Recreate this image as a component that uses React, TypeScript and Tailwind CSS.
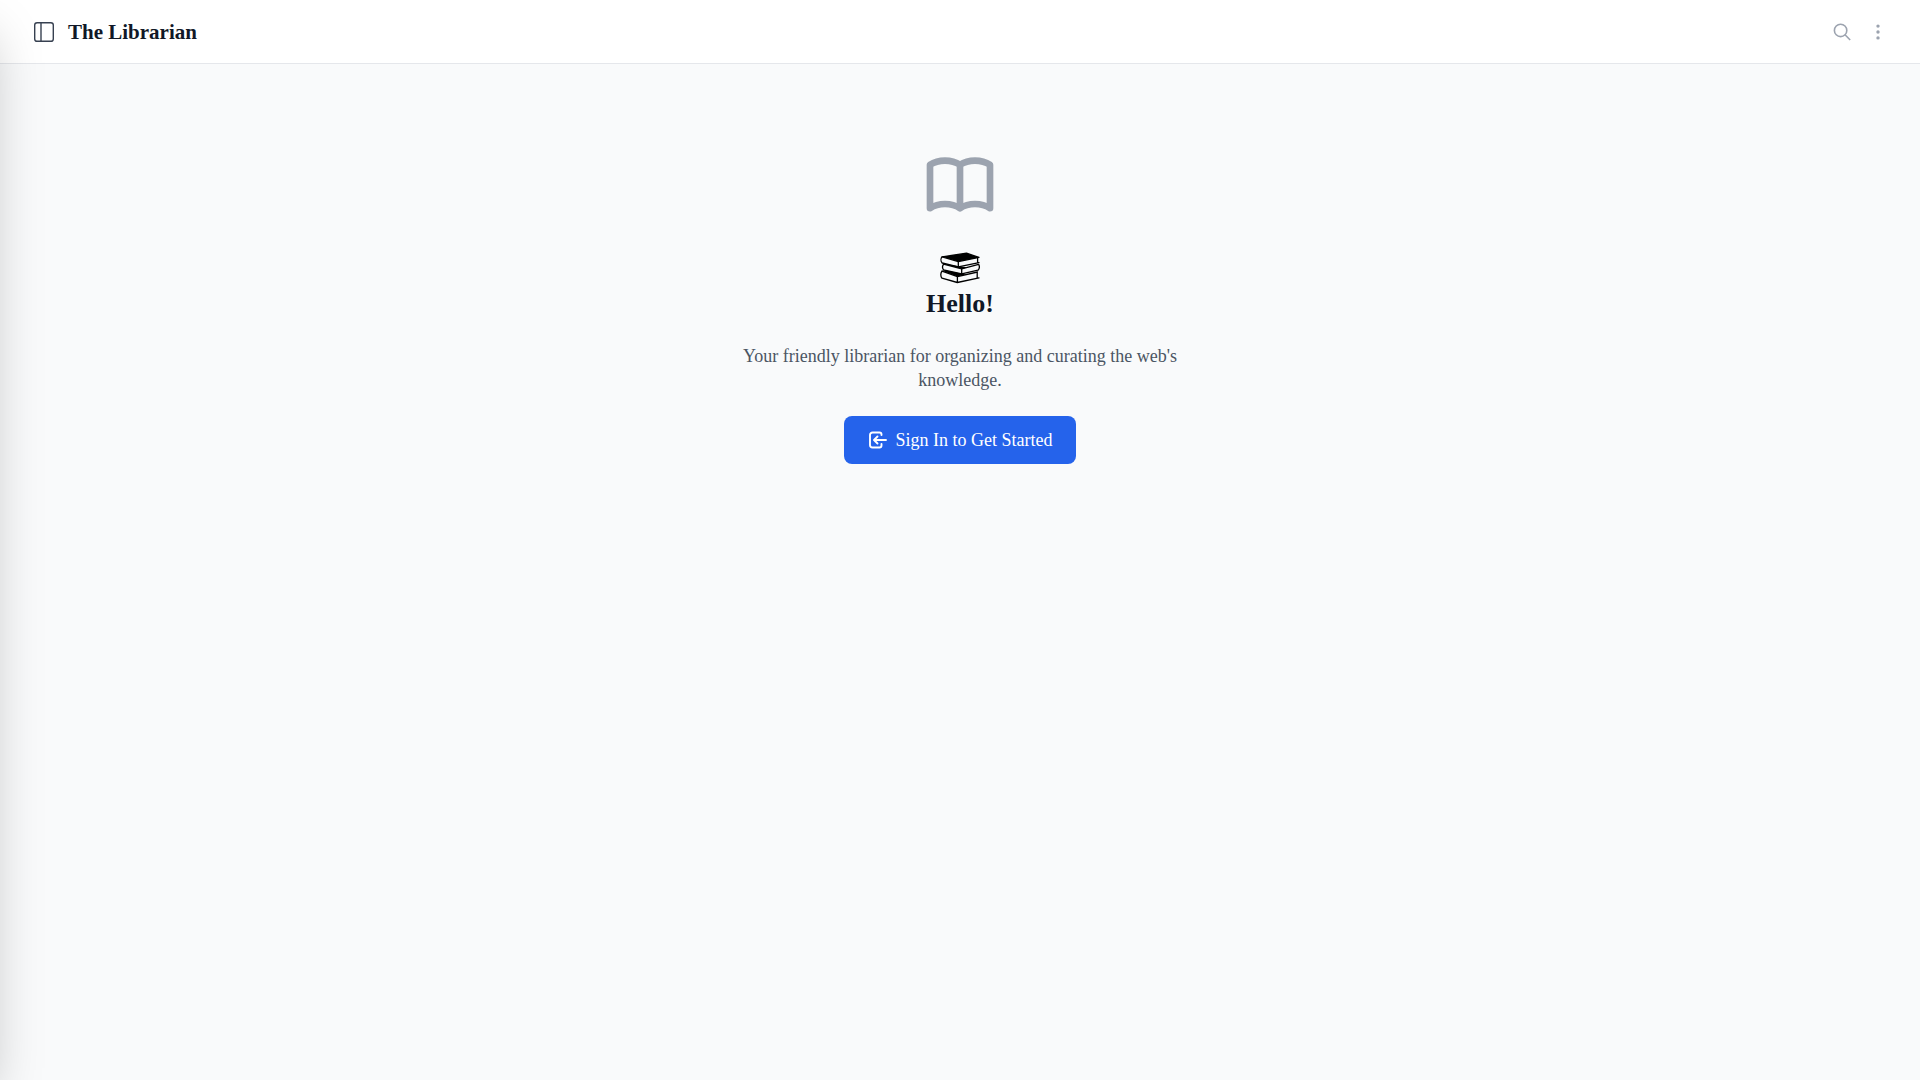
function SidebarIcon() {
  return (
    <svg className="w-6 h-6" viewBox="0 0 24 24" fill="none" stroke="currentColor" strokeWidth="1.4">
      <rect x="2.7" y="2.7" width="18.6" height="18.6" rx="2.4" />
      <path d="M9 2.7v18.6" />
    </svg>
  );
}

function SearchIcon() {
  return (
    <svg className="w-5 h-5" viewBox="0 0 20 20" fill="none" stroke="currentColor" strokeWidth="1.6">
      <circle cx="8.6" cy="8.4" r="6.2" />
      <path d="M13 12.8l5.200 5.200" />
    </svg>
  );
}

function DotsIcon() {
  return (
    <svg className="w-5 h-5" viewBox="0 0 20 20" fill="currentColor">
      <circle cx="10" cy="4.1" r="1.7" />
      <circle cx="10" cy="10" r="1.7" />
      <circle cx="10" cy="15.9" r="1.7" />
    </svg>
  );
}

function BookIcon() {
  return (
    <svg className="w-20 h-20 text-[#9ca3af]" viewBox="0 0 24 24" fill="none" stroke="currentColor" strokeWidth="2" strokeLinecap="round" strokeLinejoin="round">
      <path d="M12 6.253v13m0-13C10.832 5.477 9.246 5 7.5 5S4.168 5.477 3 6.253v13C4.168 18.477 5.754 18 7.5 18s3.332.477 4.5 1.253m0-13C13.168 5.477 14.754 5 16.5 5c1.747 0 3.332.477 4.5 1.253v13C19.832 18.477 18.247 18 16.5 18c-1.746 0-3.332.477-4.5 1.253" />
    </svg>
  );
}

function BooksIcon() {
  return (
    <svg className="w-10 h-8" viewBox="0 0 40 32" fill="none" stroke="#000" strokeWidth="1.3" strokeLinejoin="round" strokeLinecap="round">
      {/* bottom book */}
      <path d="M2 19.200C.4 21 .4 24.500 2 26.200L17.300 30.500 39 25.800M17.500 24.600L37.500 20M17.400 24.600v5.900M37.200 20.500v5" />
      <path d="M2 18.800L17.500 24.600 26 22.600 5 18.200z" fill="#000" stroke="none" />
      <path d="M2 19.200L17.500 24.600" />
      {/* middle book */}
      <path d="M3.500 12.400C2.300 14 2.300 16.200 3.500 17.800L21.700 21.900 38 18.200C39.600 16.400 39.600 14 38.600 12.400L21.700 16.900v5" />
      <path d="M3 11.400L21.700 17 28 15.200 20 14.400z" fill="#000" stroke="none" />
      <path d="M3.500 12.200L21.700 16.900" />
      {/* top book */}
      <path d="M39 10.600L18.300 14.900 2.200 11C.6 9.200.6 6.400 2.200 4.800M18.300 9.600v5.300M37.600 6.400v4.200" />
      <path d="M2.200 4.800L26.500 1.200 39 5.400 18.300 9.600z" fill="#000" />
    </svg>
  );
}

function SignInIcon() {
  return (
    <svg className="w-5 h-5" viewBox="0 0 20 20" fill="none" stroke="currentColor" strokeWidth="1.9" strokeLinecap="round" strokeLinejoin="round">
      <path d="M13.500 5V4.500A2 2 0 0 0 11.500 2.500H4.500A2.500 2.500 0 0 0 2 5v10a2.500 2.500 0 0 0 2.500 2.500h7a2 2 0 0 0 2-2v-1.500" />
      <path d="M9.500 6.500L6 10 9.500 13.500M6.500 10h11.500" />
    </svg>
  );
}

export default function App() {
  return (
    <div className="min-h-screen overflow-x-hidden bg-gray-50 font-['Liberation_Serif',serif] text-[#111827]">
      <aside className="fixed inset-y-0 left-0 z-20 w-80 -translate-x-full bg-white shadow-2xl" />
      <header className="flex h-16 items-center justify-between border-b border-gray-200 bg-white px-8">
        <div className="flex items-center gap-3">
          <button aria-label="Toggle sidebar" className="text-[#374151]">
            <SidebarIcon />
          </button>
          <h1 className="text-[21px] leading-8 font-bold">The Librarian</h1>
        </div>
        <div className="flex items-center gap-4 text-[#9ca3af]">
          <button aria-label="Search">
            <SearchIcon />
          </button>
          <button aria-label="More options">
            <DotsIcon />
          </button>
        </div>
      </header>
      <main className="mx-auto flex max-w-md flex-col items-center pt-20 text-center">
        <BookIcon />
        <div className="mt-7">
          <BooksIcon />
        </div>
        <h2 className="mt-1 mb-6 text-[26px] leading-8 font-bold">Hello!</h2>
        <p className="mb-6 text-lg leading-6 text-[#4b5563]">
          Your friendly librarian for organizing and curating the web's knowledge.
        </p>
        <button className="flex h-12 items-center gap-2 rounded-lg bg-[#2563eb] px-6 text-lg text-white">
          <SignInIcon />
          Sign In to Get Started
        </button>
      </main>
    </div>
  );
}
